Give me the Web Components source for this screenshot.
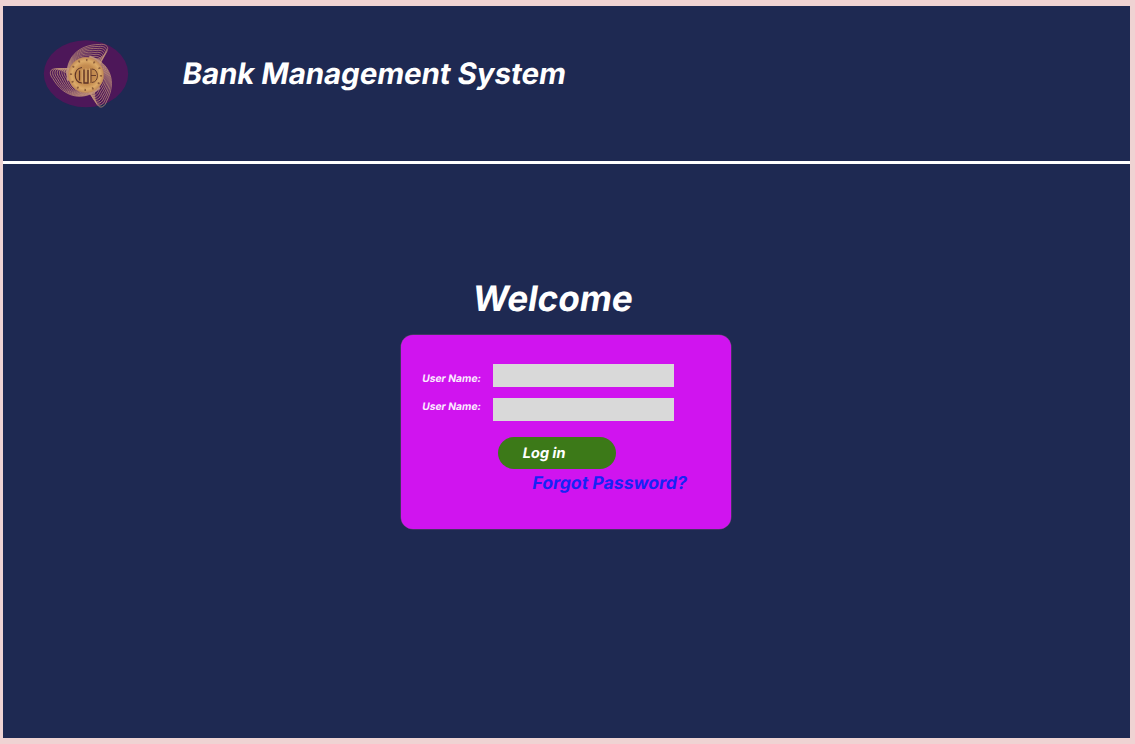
<!DOCTYPE html>
<html lang="en">
<head>
<meta charset="utf-8">
<title>Bank Management System</title>
<style>
html,body{margin:0;height:100%;overflow:hidden;background:#efd3d3}
body{font-family:Inter,"Liberation Sans",sans-serif;font-weight:700;font-variation-settings:"opsz" 14;color:#fff}
</style>
</head>
<body>
<bank-page>
  <bank-header slot="header">Bank Management System</bank-header>
  <welcome-title>Welcome</welcome-title>
  <login-card></login-card>
</bank-page>
<script>
function define(name, html, setup) {
  const t = document.createElement('template');
  t.innerHTML = html;
  customElements.define(name, class extends HTMLElement {
    constructor() {
      super();
      this.attachShadow({mode: 'open'}).append(t.content.cloneNode(true));
      if (setup) setup(this.shadowRoot);
    }
  });
}

// Upright letterforms slanted about the middle of the line.
define('slanted-text', `<style>:host{display:inline-block;transform:skewX(-9.400deg);transform-origin:0 65%;white-space:nowrap}</style><slot></slot>`);

define('bank-logo', `<style>:host{display:block;width:86px;height:68px}svg{display:block}</style>
<svg width="86" height="68" viewBox="43 39.500 86 68">
  <defs><radialGradient id="gold"><stop offset="0" stop-color="#b88048"/><stop offset=".55" stop-color="#c58d50"/><stop offset=".8" stop-color="#dcab69"/><stop offset="1" stop-color="#c08855"/></radialGradient></defs>
  <ellipse cx="86" cy="73.200" rx="42.200" ry="33.500" fill="#4d1759"/>
  <g class="arms" fill="none" stroke="#c79a7c" stroke-width=".65"></g>
  <circle cx="86" cy="74.500" r="17.800" fill="url(#gold)"/>
  <circle cx="86" cy="74.500" r="15" fill="none" stroke="#71432b" stroke-width="2.200" stroke-dasharray="1.600 6.200" opacity=".7"/>
  <g fill="none" stroke="#5e3427">
    <path stroke-width="1.200" d="M82 67c-9 1-9 15 0 15.500M79.500 70v10"/>
    <path stroke-width="1.300" d="M84 69v13.500h4V69.500"/>
    <path stroke-width=".9" d="M91 68v14.500M92 68.500c7 0 7.500 13 0 13.500M91 75h5"/>
  </g>
  <path d="M82.200 69v13M86 68v13M89.600 68v14" stroke="#e2b778" stroke-width=".8"/>
</svg>`, root => {
  const NS = 'http://www.w3.org/2000/svg', arms = root.querySelector('.arms');
  for (const angle of [0, 118, 240]) {
    const g = document.createElementNS(NS, 'g');
    g.setAttribute('transform', `rotate(${angle} 86 74.500)`);
    for (let i = 0; i < 8; i++) {
      const p = document.createElementNS(NS, 'path');
      const x = 107.5 - i * 1.1, y = 49 + i * 2;
      p.setAttribute('d', `M${67.5 + i * .3} 80C${64 + i * .6} ${58 + i * .7} ${78 - i * .2} ${44 + i * 1.4} ${x - 8} ${y - 5}C${x - 2} ${y - 6} ${x + 1} ${y - 3} ${x} ${y}C${x - 1} ${y + 6} ${x - 10} ${y + 10} ${x - 16} ${y + 12}`);
      g.append(p);
    }
    arms.append(g);
  }
});

define('bank-header', `<style>
:host{display:flex;align-items:flex-start;box-sizing:border-box;height:158.400px;padding:34px 0 0 40px;border-bottom:3px solid #fff;gap:53.800px}
h1{margin:0;padding-top:16.500px;font-size:29.400px;line-height:36px;white-space:nowrap}
</style><bank-logo></bank-logo><h1><slanted-text><slot></slot></slanted-text></h1>`);

define('bank-page', `<style>
:host{display:flex;flex-direction:column;box-sizing:border-box;width:1127.800px;height:732.500px;margin:5.600px 0 0 2.500px;background:#1e2952}
main{display:flex;flex-direction:column;align-items:flex-start;padding:112px 0 0 398.500px}
</style><slot name="header"></slot><main><slot></slot></main>`);

define('welcome-title', `<style>
:host{display:block;margin-left:70.500px;height:59px}
h2{margin:0;font-size:35.100px;line-height:45px;white-space:nowrap}
</style><h2><slanted-text><slot></slot></slanted-text></h2>`);

define('login-field', `<style>
:host{display:flex;align-items:flex-start;width:252px;height:23px}
label{box-sizing:border-box;width:71px;flex:none;padding-top:var(--label-top,7.500px);font-size:10.300px;line-height:14px;white-space:nowrap;color:#fbeaff}
input{display:block;box-sizing:border-box;width:181px;height:23px;padding:0 6px;border:0;border-radius:0;background:#d9d9d9;font:inherit;font-size:12px;outline:0}
</style><label for="value"><slanted-text><slot></slot></slanted-text></label><input id="value">`);

define('login-button', `<style>
:host{display:block}
button{display:block;width:117.500px;height:32.500px;padding:0 0 0 24px;border:0;border-radius:17px;background:#3c7918;color:#fff;font:inherit;font-size:14.600px;font-variation-settings:inherit;line-height:32px;text-align:left}
</style><button><slanted-text><slot></slot></slanted-text></button>`);

define('login-card', `<style>
:host{display:flex;flex-direction:column;align-items:flex-start;box-sizing:border-box;width:330px;height:194px;padding:29px 0 0 21px;border-radius:12px;background:#d014ef;box-shadow:0 0 0 .5px #684376}
login-field + login-field{margin-top:11px;--label-top:1.500px}
login-button{margin:15.700px 0 0 76px}
a{margin:2.700px 0 0 110px;font-size:17.650px;line-height:22px;color:#1722f6;text-decoration:none;white-space:nowrap}
</style>
<login-field>User Name:</login-field><login-field>User Name:</login-field>
<login-button>Log in</login-button><a href="#"><slanted-text>Forgot Password?</slanted-text></a>`);
</script>
</body>
</html>
